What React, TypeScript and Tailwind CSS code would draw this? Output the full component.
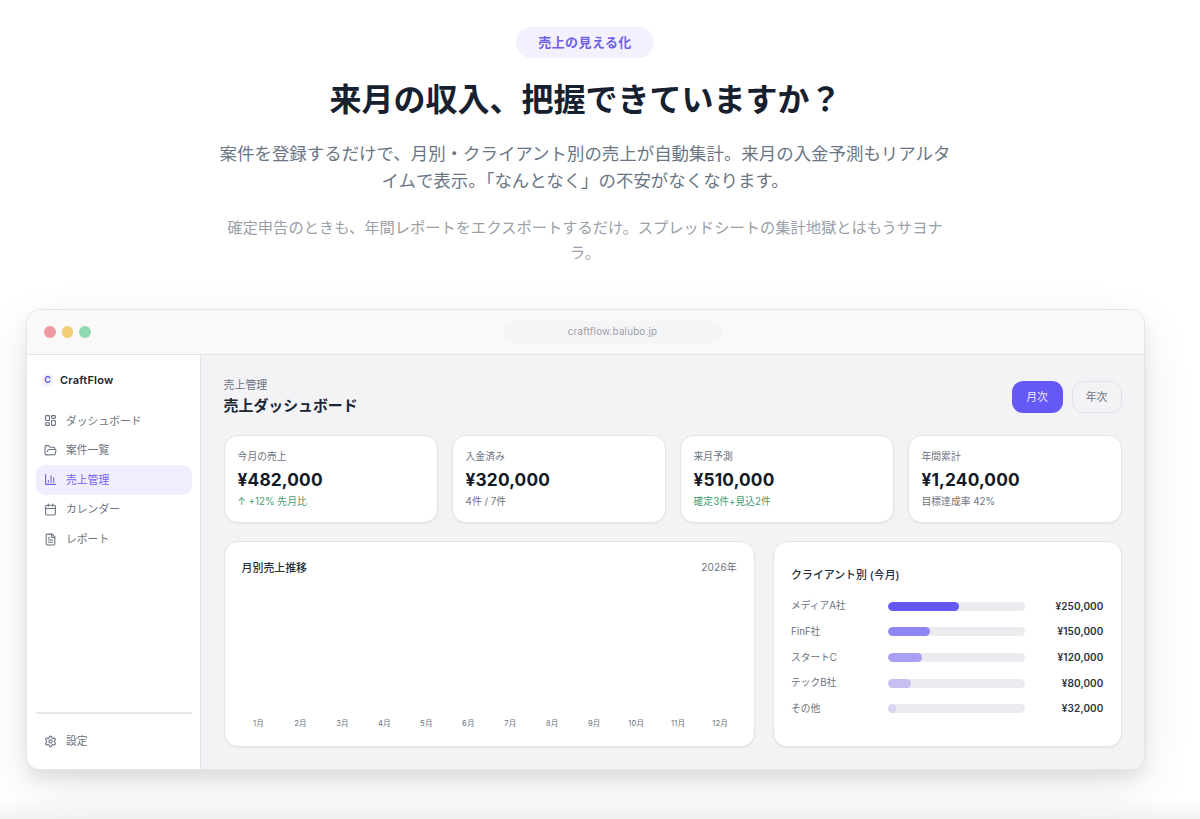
import { Calendar, FileText, FolderOpen, LayoutDashboard, Settings } from "lucide-react";
import type { ReactNode } from "react";

function ChartIcon() {
  return (
    <svg
      width="13"
      height="13"
      viewBox="0 0 24 24"
      fill="none"
      stroke="currentColor"
      strokeWidth="2"
      strokeLinecap="round"
      strokeLinejoin="round"
    >
      <path d="M3 3v18h18" />
      <path d="M8 17v-3" />
      <path d="M13 17V5" />
      <path d="M18 17V9" />
    </svg>
  );
}

const navItems: { label: string; icon: ReactNode; active?: boolean }[] = [
  { label: "ダッシュボード", icon: <LayoutDashboard size={13} /> },
  { label: "案件一覧", icon: <FolderOpen size={13} /> },
  { label: "売上管理", icon: <ChartIcon />, active: true },
  { label: "カレンダー", icon: <Calendar size={13} /> },
  { label: "レポート", icon: <FileText size={13} /> },
];

const stats = [
  { label: "今月の売上", value: "¥482,000", note: "↑ +12% 先月比", green: true },
  { label: "入金済み", value: "¥320,000", note: "4件 / 7件", green: false },
  { label: "来月予測", value: "¥510,000", note: "確定3件+見込2件", green: true },
  { label: "年間累計", value: "¥1,240,000", note: "目標達成率 42%", green: false },
];

const months = ["1月", "2月", "3月", "4月", "5月", "6月", "7月", "8月", "9月", "10月", "11月", "12月"];

const clients = [
  { name: "メディアA社", amount: "¥250,000", width: 52, color: "bg-[#6558f5]" },
  { name: "FinF社", amount: "¥150,000", width: 31, color: "bg-[#8f85f3]" },
  { name: "スタートC", amount: "¥120,000", width: 25, color: "bg-[#a8a1f3]" },
  { name: "テックB社", amount: "¥80,000", width: 17, color: "bg-[#c5bff2]" },
  { name: "その他", amount: "¥32,000", width: 6, color: "bg-[#d9d5f0]" },
];

function Hero() {
  return (
    <header className="flex w-[1170px] flex-col items-center text-center">
      <div className="mt-[27px] flex h-[31px] items-center rounded-full bg-[#f3f1fe] px-[22px] text-[13px] font-semibold tracking-[0.4px] text-[#6f60e8]">
        売上の見える化
      </div>
      <h1 className="mt-[18px] pl-px text-[32px] leading-[48px] font-bold text-[#16202e]">
        来月の収入、把握できていますか？
      </h1>
      <p className="mt-[16px] text-[17.44px] leading-[27px] whitespace-nowrap text-[#6b7684]">
        案件を登録するだけで、月別・クライアント別の売上が自動集計。来月の入金予測もリアルタ
        <br />
        イムで表示。「なんとなく」の不安がなくなります。
      </p>
      <p className="mt-[21px] text-[15.28px] leading-[25px] whitespace-nowrap text-[#9a9fa8]">
        確定申告のときも、年間レポートをエクスポートするだけ。スプレッドシートの集計地獄とはもうサヨナ
        <br />
        ラ。
      </p>
    </header>
  );
}

function Sidebar() {
  return (
    <aside className="flex w-[174px] shrink-0 flex-col border-r border-[#e4e5ea] bg-white pr-[8px] pl-[9px]">
      <div className="mt-[17px] flex h-4 items-center pl-[6px]">
        <span className="flex h-[13px] w-[11px] items-center justify-center rounded-[4px] bg-[#f5f3fe] text-[9px] font-bold text-[#6558f5]">
          C
        </span>
        <span className="ml-[7px] text-[11px] font-semibold tracking-[0.2px] text-[#1b2432]">CraftFlow</span>
      </div>
      <nav className="mt-[18px] flex flex-col">
        {navItems.map((item) => (
          <a
            key={item.label}
            className={
              item.active
                ? "flex h-[29.6px] items-center gap-[9px] rounded-[9px] bg-[#f0eefe] pl-[8px] text-[10.8px] text-[#7063ea]"
                : "flex h-[29.6px] items-center gap-[9px] rounded-[9px] pl-[8px] text-[10.8px] text-[#6b7280]"
            }
          >
            {item.icon}
            <span className="pt-[2px]">{item.label}</span>
          </a>
        ))}
      </nav>
      <div className="mt-auto mb-[13px] border-t-2 border-[#e6e7ec] pt-[13px]">
        <a className="flex h-[29px] items-center gap-[9px] pl-[8px] text-[10.8px] text-[#6b7280]">
          <Settings size={13} />
          <span className="pt-[2px]">設定</span>
        </a>
      </div>
    </aside>
  );
}

function MonthlyChart() {
  return (
    <section className="flex h-[206px] w-[531.5px] shrink-0 flex-col rounded-[14px] border border-[#e3e4e9] bg-white px-[17px] pt-[17px] pb-[15px] shadow-[0_1px_2px_rgba(0,0,0,0.05)]">
      <div className="flex items-start justify-between">
        <h3 className="pt-px text-[10.9px] leading-4 font-medium text-[#252d3a]">月別売上推移</h3>
        <span className="text-[10px] leading-4 tracking-[0.25px] text-[#6b7280]">2026年</span>
      </div>
      <div className="-mx-1 mt-auto grid h-[14px] grid-cols-12 text-center text-[7.6px] leading-[14px] tracking-[0.2px] text-[#6b7280]">
        {months.map((month) => (
          <span key={month}>{month}</span>
        ))}
      </div>
    </section>
  );
}

function ClientBreakdown() {
  return (
    <section className="flex h-[206px] flex-1 flex-col rounded-[14px] border border-[#e3e4e9] bg-white px-[17px] pt-[25px] shadow-[0_1px_2px_rgba(0,0,0,0.05)]">
      <h3 className="text-[10.9px] leading-4 font-medium text-[#252d3a]">クライアント別 (今月)</h3>
      <ul className="mt-[10.2px] flex flex-col">
        {clients.map((client) => (
          <li key={client.name} className="flex h-[25.7px] items-center">
            <span className="w-[96.5px] pt-px text-[9.7px] text-[#6b7280]">{client.name}</span>
            <span className="h-[9px] w-[137px] overflow-hidden rounded-full bg-[#ebecef]">
              <span
                className={`block h-full rounded-full ${client.color}`}
                style={{ width: `${client.width}%` }}
              />
            </span>
            <span className="ml-auto text-[10px] font-semibold tracking-[0.1px] text-[#2b3340]">{client.amount}</span>
          </li>
        ))}
      </ul>
    </section>
  );
}

function Dashboard() {
  return (
    <main className="flex flex-1 flex-col bg-[#f3f3f6] pt-[22px] pr-[22px] pl-[22.6px]">
      <div className="flex h-[58px] items-start justify-between">
        <div>
          <p className="text-[10.9px] leading-4 text-[#6b7280]">売上管理</p>
          <h2 className="mt-[2px] text-[14.9px] leading-[22px] font-semibold text-[#1b2432]">売上ダッシュボード</h2>
        </div>
        <div className="mt-[4px] flex gap-[9px] text-[10.8px]">
          <button className="h-8 w-[51px] rounded-[11px] bg-[#6558f5] pt-[2px] text-[#eeecff]">月次</button>
          <button className="h-8 w-[50px] rounded-[11px] border border-[#e1e2e7] pt-[2px] text-[#6b7280]">年次</button>
        </div>
      </div>
      <div className="grid grid-cols-4 gap-[14px]">
        {stats.map((stat) => (
          <section
            key={stat.label}
            className="h-[88px] rounded-[14px] border border-[#e3e4e9] bg-white pt-[13px] pl-[13px] shadow-[0_1px_2px_rgba(0,0,0,0.05)]"
          >
            <p className="text-[9.8px] leading-[15px] text-[#6b7280]">{stat.label}</p>
            <p className="mt-[4px] text-[17.3px] leading-[24px] font-bold tracking-[0.15px] text-[#131a26]">
              {stat.value}
            </p>
            <p
              className={
                stat.green
                  ? "mt-[2px] text-[9.8px] leading-[15px] text-[#449c73]"
                  : "mt-[2px] text-[9.8px] leading-[15px] text-[#6b7280]"
              }
            >
              {stat.note}
            </p>
          </section>
        ))}
      </div>
      <div className="mt-[18px] flex gap-[18px]">
        <MonthlyChart />
        <ClientBreakdown />
      </div>
    </main>
  );
}

export default function App() {
  return (
    <div className="flex h-[819px] w-[1200px] flex-col overflow-hidden bg-white font-['Inter','Noto_Sans_CJK_JP',sans-serif]">
      <Hero />
      <div className="mt-[44px] ml-[26px] flex h-[461px] w-[1118.5px] shrink-0 flex-col overflow-hidden rounded-[14px] border border-[#e4e5ea] bg-white shadow-[0_18px_50px_rgba(0,0,0,0.09),0_8px_14px_rgba(0,0,0,0.07)]">
        <div className="flex h-[45px] shrink-0 items-center border-b border-[#e4e5ea] bg-[#f9f9fa] pl-[17px]">
          <div className="flex gap-[6px]">
            <span className="size-[11.5px] rounded-full bg-[#ef99a5]" />
            <span className="size-[11.5px] rounded-full bg-[#f4ce76]" />
            <span className="size-[11.5px] rounded-full bg-[#8fd9b1]" />
          </div>
          <div className="ml-[412.5px] flex h-[22px] w-[219px] items-center justify-center rounded-[9px] bg-[#f5f5f8] text-[9.8px] tracking-[0.2px] text-[#9a9fa8]">
            craftflow.balubo.jp
          </div>
        </div>
        <div className="flex flex-1">
          <Sidebar />
          <Dashboard />
        </div>
      </div>
      <div className="mt-auto h-5 w-full shrink-0 bg-linear-to-b from-black/0 to-black/5" />
    </div>
  );
}
